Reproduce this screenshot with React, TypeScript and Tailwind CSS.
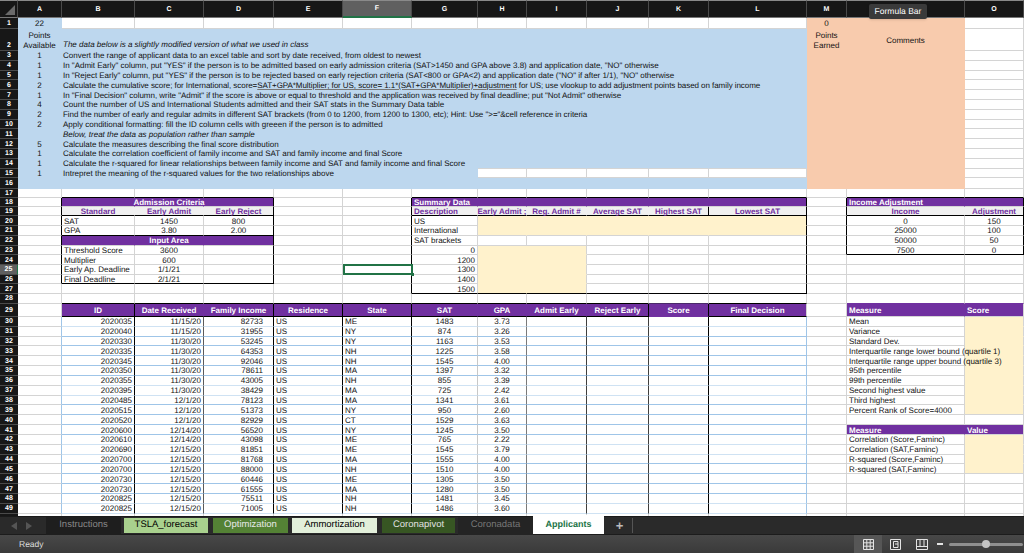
import React from "react";

const cols = ["A", "B", "C", "D", "E", "F", "G", "H", "I", "J", "K", "L", "M", "N", "O"];
const rowNums = Array.from({ length: 50 }, (_, i) => i + 1);
const lightRows = [30, 36, 37, 42, 43, 48, 49];

const applicants = [
  ["2020035", "11/15/20", "82733", "ME", "1483", "3.73"],
  ["2020040", "11/15/20", "31955", "NY", "874", "3.26"],
  ["2020330", "11/30/20", "53245", "NY", "1163", "3.53"],
  ["2020335", "11/30/20", "64353", "NH", "1225", "3.58"],
  ["2020345", "11/30/20", "92046", "NH", "1545", "4.00"],
  ["2020350", "11/30/20", "78611", "MA", "1397", "3.32"],
  ["2020355", "11/30/20", "43005", "NH", "855", "3.39"],
  ["2020395", "11/30/20", "38429", "MA", "725", "2.42"],
  ["2020485", "12/1/20", "78123", "MA", "1341", "3.61"],
  ["2020515", "12/1/20", "51373", "NY", "950", "2.60"],
  ["2020520", "12/1/20", "82929", "CT", "1529", "3.63"],
  ["2020600", "12/14/20", "56520", "NY", "1245", "3.50"],
  ["2020610", "12/14/20", "43098", "ME", "765", "2.22"],
  ["2020690", "12/15/20", "81851", "ME", "1545", "3.79"],
  ["2020700", "12/15/20", "81768", "MA", "1555", "4.00"],
  ["2020700", "12/15/20", "88000", "NH", "1510", "4.00"],
  ["2020730", "12/15/20", "60446", "ME", "1305", "3.50"],
  ["2020730", "12/15/20", "61555", "MA", "1280", "3.50"],
  ["2020825", "12/15/20", "75511", "NH", "1481", "3.45"],
  ["2020825", "12/15/20", "71005", "NH", "1486", "3.60"],
];

const text: Record<string, React.ReactNode> = {
  A1: "22",
  A2: (
    <>
      Points
      <br />
      Available
    </>
  ),
  B2: <i>The data below is a slightly modified version of what we used in class</i>,
  A3: "1",
  B3: "Convert the range of applicant data to an excel table and sort by date received, from oldest to newest",
  A4: "1",
  B4: <span className="tracking-[-0.012px]">In "Admit Early" column, put "YES" if the person is to be admitted based on early admission criteria (SAT&gt;1450 and GPA above 3.8) and application date, "NO" otherwise</span>,
  A5: "1",
  B5: <span className="tracking-[-0.03px]">In "Reject Early" column, put "YES" if the person is to be rejected based on early rejection criteria (SAT&lt;800 or GPA&lt;2) and application date ("NO" if after 1/1), "NO" otherwise</span>,
  A6: "2",
  B6: (
    <span className="tracking-[-0.06px]">
      Calculate the cumulative score; for International, score=
      <span className="underline decoration-[#777]">SAT+GPA*Multiplier; for US, score= 1.1*(SAT+GPA*Multiplier)+adjustment</span> for US; use
      vlookup to add adjustment points based on family income
    </span>
  ),
  A7: "1",
  B7: <span className="tracking-[-0.036px]">In "Final Decision" column, write "Admit" if the score is above or equal to threshold and the application was received by final deadline; put "Not Admit" otherwise</span>,
  A8: "4",
  B8: "Count the number of US and International Students admitted and their SAT stats in the Summary Data table",
  A9: "2",
  B9: <span className="tracking-[-0.04px]">Find the number of early and regular admits in different SAT brackets (from 0 to 1200, from 1200 to 1300, etc); Hint: Use "&gt;="&amp;cell reference in criteria</span>,
  A10: "2",
  B10: "Apply conditional formatting: fill the ID column cells with greeen if the person is to admitted",
  B11: <i>Below, treat the data as population rather than sample</i>,
  A12: "5",
  B12: "Calculate the measures describing the final score distribution",
  A13: "1",
  B13: "Calculate the correlation coefficient of family income and SAT and family income and final Score",
  A14: "1",
  B14: "Calculate the r-squared for linear relationships between family income and SAT and family income and final Score",
  A15: "1",
  B15: "Intrepret the meaning of the r-squared values for the two relationships above",
  M1: "0",
  M2: (
    <>
      Points
      <br />
      Earned
    </>
  ),
  N2: "Comments",

  C18: "Admission Criteria",
  B19: "Standard",
  C19: "Early Admit",
  D19: "Early Reject",
  B20: "SAT",
  C20: "1450",
  D20: "800",
  B21: "GPA",
  C21: "3.80",
  D21: "2.00",
  C22: "Input Area",
  B23: "Threshold Score",
  C23: "3600",
  B24: "Multiplier",
  C24: "600",
  B25: "Early Ap. Deadline",
  C25: "1/1/21",
  B26: "Final Deadline",
  C26: "2/1/21",

  G18: "Summary Data",
  G19: "Description",
  H19: "Early Admit ;",
  I19: "Reg. Admit #",
  J19: "Average SAT",
  K19: "Highest SAT",
  L19: "Lowest SAT",
  G20: "US",
  G21: "International",
  G22: "SAT brackets",
  G23: "0",
  G24: "1200",
  G25: "1300",
  G26: "1400",
  G27: "1500",

  N18: "Income Adjustment",
  N19: "Income",
  O19: "Adjustment",
  N20: "0",
  O20: "150",
  N21: "25000",
  O21: "100",
  N22: "50000",
  O22: "50",
  N23: "7500",
  O23: "0",

  B29: "ID",
  C29: "Date Received",
  D29: "Family Income",
  E29: "Residence",
  F29: "State",
  G29: "SAT",
  H29: "GPA",
  I29: "Admit Early",
  J29: "Reject Early",
  K29: "Score",
  L29: "Final Decision",

  N29: "Measure",
  O29: "Score",
  N30: "Mean",
  N31: "Variance",
  N32: "Standard Dev.",
  N33: "Interquartile range lower bound (quartile 1)",
  N34: "Interquartile range upper bound (quartile 3)",
  N35: "95th percentile",
  N36: "99th percentile",
  N37: "Second highest value",
  N38: "Third highest",
  N39: "Percent Rank of Score=4000",
  N41: "Measure",
  O41: "Value",
  N42: "Correlation (Score,Faminc)",
  N43: "Correlation (SAT,Faminc)",
  N44: "R-squared (Score,Faminc)",
  N45: "R-squared (SAT,Faminc)",
};

applicants.forEach((a, i) => {
  const r = 30 + i;
  text["B" + r] = a[0];
  text["C" + r] = a[1];
  text["D" + r] = a[2];
  text["E" + r] = "US";
  text["F" + r] = a[3];
  text["G" + r] = a[4];
  text["H" + r] = a[5];
});

const inRange = (c: string, from: string, to: string) => c >= from && c <= to;

function fill(c: string, r: number) {
  if (r <= 16 && (c === "M" || c === "N")) return "bg-[#f8cbad]";
  if (r === 1 && c === "A") return "bg-[#bdd7ee]";
  if (r >= 2 && r <= 16 && inRange(c, "A", "L") && !(r === 15 && inRange(c, "H", "L"))) return "bg-[#bdd7ee]";
  if ((r === 18 || r === 22) && inRange(c, "B", "D")) return "bg-[#7030a0]";
  if (r === 19 && inRange(c, "B", "D")) return "bg-[#f0f0f0]";
  if (r === 18 && inRange(c, "G", "L")) return "bg-[#7030a0]";
  if (r === 19 && inRange(c, "G", "L")) return "bg-[#f0f0f0]";
  if ((r === 20 || r === 21) && inRange(c, "H", "L")) return "bg-[#fff2cc]";
  if (r >= 23 && r <= 27 && inRange(c, "H", "I")) return "bg-[#fff2cc]";
  if (r === 18 && inRange(c, "N", "O")) return "bg-[#7030a0]";
  if (r === 19 && inRange(c, "N", "O")) return "bg-[#f0f0f0]";
  if (r === 29 && (inRange(c, "B", "L") || inRange(c, "N", "O"))) return "bg-[#7030a0]";
  if (r === 41 && inRange(c, "N", "O")) return "bg-[#7030a0]";
  if (c === "O" && ((r >= 30 && r <= 39) || (r >= 42 && r <= 45))) return "bg-[#fff2cc]";
  return "bg-white";
}

function rightBorder(c: string, r: number) {
  const hidden = fill(c, r);
  const mainRow = r >= 29 && r <= 49;
  if (r <= 16 && c === "M") return "border-r-transparent";
  if (r <= 16 && hidden === "bg-[#bdd7ee]") return "border-r-transparent";
  if (c === "N" && r <= 16) return "border-r-transparent";
  if (r >= 18 && r <= 26 && (c === "A" || c === "D")) return "border-r-black";
  if (r >= 18 && r <= 27 && (c === "F" || c === "L")) return "border-r-black";
  if (r === 19 && c === "K") return "border-r-black";
  if (r >= 18 && r <= 23 && (c === "M" || c === "O")) return "border-r-black";
  if (r === 29 && (c === "C" || c === "G" || c === "H" || c === "I")) return "border-r-transparent";
  if (mainRow) {
    if (c === "A" && r > 29) return "border-r-[#9fc5e8]";
    if (c === "B" || c === "D" || c === "E" || c === "F" || c === "K") return "border-r-black";
    if (r === 29 && c === "J") return "border-r-black";
    if (c === "C") return "border-r-[#5a5a5a]";
    if (c === "G") return "border-r-[#c8c8c8]";
    if (c === "H") return "border-r-[#7a7a7a]";
    if (c === "I" || c === "J") return "border-r-[#3f3f3f]";
    if (c === "L" && r > 29) return "border-r-[#9fc5e8]";
  }
  if ((r === 18 || r === 22) && inRange(c, "B", "C")) return "border-r-transparent";
  if (r === 18 && inRange(c, "G", "K")) return "border-r-transparent";
  if ((r === 18 || r === 29 || r === 41) && c === "N") return "border-r-transparent";
  if ((r === 20 || r === 21) && inRange(c, "H", "K")) return "border-r-transparent";
  if (r >= 23 && r <= 27 && c === "H") return "border-r-transparent";
  if (r === 19 && (inRange(c, "B", "C") || inRange(c, "G", "J") || c === "N")) return "border-r-transparent";
  return "border-r-[#d4d4d4]";
}

function bottomBorder(c: string, r: number) {
  if (r <= 16 && (c === "M" || c === "N")) return "border-b-transparent";
  if (r < 16 && fill(c, r) === "bg-[#bdd7ee]" && fill(c, r + 1) === "bg-[#bdd7ee]") return "border-b-transparent";
  if (r === 16 && inRange(c, "A", "L")) return "border-b-transparent";
  if ((r === 17 || r === 19 || r === 21 || r === 26) && inRange(c, "B", "D")) return "border-b-black";
  if ((r === 17 || r === 19 || r === 27) && inRange(c, "G", "L")) return "border-b-black";
  if ((r === 17 || r === 19 || r === 23) && inRange(c, "N", "O")) return "border-b-black";
  if ((r === 20 || (r >= 23 && r <= 26)) && inRange(c, "H", "I")) return "border-b-transparent";
  if (r === 20 && inRange(c, "J", "L")) return "border-b-transparent";
  if (r === 28 && c === "K") return "border-b-[#4a2a6a]";
  if (r === 29 && c === "K") return "border-b-transparent";
  if (r === 28 && inRange(c, "B", "L")) return "border-b-black";
  if (r === 29 && inRange(c, "B", "L")) return "border-b-black";
  if (r === 28 && inRange(c, "N", "O")) return "border-b-[#7030a0]";
  if (c === "O" && ((r >= 30 && r <= 38) || (r >= 42 && r <= 44))) return "border-b-transparent";
  if (r >= 30 && r <= 49 && inRange(c, "B", "L")) {
    return lightRows.includes(r) ? "border-b-[#cfe2f3]" : "border-b-[#9fc5e8]";
  }
  return "border-b-[#d4d4d4]";
}

function align(c: string, r: number) {
  if (r <= 16) return c === "B" ? "justify-start pl-[1px]" : "justify-center text-center";
  if ((r === 18 || r === 22) && c === "C") return "justify-center";
  if (r === 18) return "justify-start";
  if ((r === 29 || r === 41) && inRange(c, "N", "O")) return "justify-start";
  if (r === 19 && c === "G") return "justify-start";
  if (r === 19 || r === 29) return "justify-center";
  if (r <= 26 && inRange(c, "C", "D")) return "justify-center";
  if (r >= 23 && r <= 27 && c === "G") return "justify-end";
  if (r <= 23 && inRange(c, "N", "O")) return "justify-center";
  if (r >= 30 && c === "B") return "justify-end";
  if (r >= 30 && c === "C") return "justify-end";
  if (r >= 30 && c === "D") return "justify-end pr-[10px]";
  if (r >= 30 && inRange(c, "G", "H")) return "justify-center";
  return "justify-start";
}

function tone(c: string, r: number) {
  if (fill(c, r) === "bg-[#7030a0]") return "text-white font-bold";
  if (fill(c, r) === "bg-[#f0f0f0]") return "text-[#7030a0] font-bold";
  return "text-[#111]";
}

// grid items paint one by one, so cells whose text or outline spills need to sit above the next cell
function lift(c: string, r: number) {
  if (r <= 16 && c === "B") return "relative z-[1]";
  if (c === "N" && (r === 33 || r === 34)) return "relative z-[1]";
  if (c === "F" && r === 25) return "relative z-[1]";
  if (c === "C" && r === 18) return "relative z-[1]";
  return "";
}

function Cell({ c, r }: { c: string; r: number }) {
  const id = c + r;
  const item = r === 2 && (c === "B") ? "items-end" : "items-center pt-[2px]";
  return (
    <div
      className={`flex min-w-0 px-[2px] border-r border-b whitespace-nowrap ${item} ${fill(c, r)} ${rightBorder(c, r)} ${bottomBorder(c, r)} ${align(c, r)} ${tone(c, r)} ${lift(c, r)}`}
    >
      {text[id] !== undefined && <span className="leading-[10px]">{text[id]}</span>}
      {id === "F25" && (
        <div className="absolute left-0 top-[-1px] w-[70px] h-[11px] border-2 border-[#217346]">
          <div className="absolute right-[-3px] bottom-[-3px] w-[3px] h-[3px] bg-[#217346]" />
        </div>
      )}
    </div>
  );
}

function ColHead({ c }: { c: string }) {
  const active = c === "F";
  return (
    <div
      className={`flex items-center justify-center pt-[2px] font-bold text-[7px] text-white border-t border-t-[#8a8a8a] border-r border-r-[#4a4a4a] ${
        active ? "bg-[#606060] border-b-2 border-b-[#217346]" : "bg-[#171717] border-b border-b-[#777]"
      }`}
    >
      {c === "N" ? "" : c}
    </div>
  );
}

function RowHead({ r }: { r: number }) {
  const active = r === 25;
  return (
    <div
      className={`flex justify-center font-bold text-[7px] leading-[8px] text-white border-b border-b-[#4a4a4a] ${r === 2 ? "items-end" : "items-center pt-[2px]"} ${
        active ? "bg-[#606060] border-r border-r-[#217346]" : "bg-[#171717]"
      }`}
    >
      {r === 50 ? "" : r}
    </div>
  );
}

function Tab({ label, className }: { label: string; className: string }) {
  return <div className={`flex items-center justify-center h-[15px] text-[9.5px] ${className}`}>{label}</div>;
}

function StatusIcons() {
  return (
    <div className="ml-auto flex items-center h-full">
      <div className="flex items-center justify-center w-[28px] h-full bg-[#565656]">
        <svg width="11" height="11" viewBox="0 0 11 11" fill="none" stroke="#e4e4e4" strokeWidth="1">
          <path d="M.5.5h10v10H.5zM.5 3.8h10M.5 7.2h10M3.8.5v10M7.2.5v10" />
        </svg>
      </div>
      <div className="flex items-center justify-center w-[27px] h-full">
        <svg width="11" height="11" viewBox="0 0 11 11" fill="none" stroke="#e4e4e4" strokeWidth="1">
          <path d="M.5.5h10v10H.5zM3.5 2.5h4.5v6H3.5zM5 5h3" />
        </svg>
      </div>
      <div className="flex items-center justify-center w-[25px] h-full">
        <svg width="12" height="11" viewBox="0 0 12 11" fill="none" stroke="#e4e4e4" strokeWidth="1">
          <path d="M.5.5h11v10H.5zM.5 7.5h11M4 .5v7M8 .5v7" />
        </svg>
      </div>
      <div className="ml-[3px] w-[6px] h-[2px] bg-[#e4e4e4]" />
      <div className="relative ml-[6px] mr-[1px] w-[74px] h-[3px] rounded bg-[#8f8f8f]">
        <div className="absolute left-[33px] top-[-3px] w-[8px] h-[8px] rounded-full bg-[#c4c4c4]" />
      </div>
    </div>
  );
}

export default function App() {
  return (
    <div className="relative flex flex-col w-[1024px] h-[553px] overflow-hidden font-['Liberation_Sans',sans-serif] text-[8px] [text-rendering:geometricPrecision]">
      <div className="grid h-[516px] overflow-hidden grid-cols-[18px_44px_73px_69px_70px_69px_69px_66px_49px_60px_62px_60px_98px_40px_118px_59px] grid-rows-[18px_11px_22px_repeat(13,9.8px)_10.6px_9.4px_9px_9px_repeat(9,9.73px)_13px_repeat(20,9.85px)_2px]">
        <div className="relative bg-[#171717] border-t border-t-[#8a8a8a] border-r border-r-[#4a4a4a] border-b border-b-[#777]">
          <svg className="absolute left-[5px] top-[4px]" width="10" height="10" viewBox="0 0 10 10">
            <polygon points="10,0 10,10 0,10" fill="#6a6a6a" />
          </svg>
        </div>
        {cols.map((c) => (
          <ColHead key={c} c={c} />
        ))}
        {rowNums.map((r) => (
          <React.Fragment key={r}>
            <RowHead r={r} />
            {cols.map((c) => (
              <Cell key={c} c={c} r={r} />
            ))}
          </React.Fragment>
        ))}
      </div>

      <div className="flex items-center h-[19px] bg-[#2a2a2a] border-t border-[#1a1a1a] border-b border-b-[#1c1c1c]">
        <div className="flex items-center gap-[9px] w-[46px] pl-[11px]">
          <div className="w-0 h-0 border-y-[4px] border-y-transparent border-r-[6px] border-r-[#555]" />
          <div className="w-0 h-0 border-y-[4px] border-y-transparent border-l-[6px] border-l-[#555]" />
        </div>
        <Tab label="Instructions" className="w-[75px] h-[18px] bg-[#1e1e1e] text-[#888]" />
        <Tab label="TSLA_forecast" className="ml-[3px] w-[84px] bg-[#a9d18e] text-black" />
        <Tab label="Optimization" className="ml-[5px] w-[75px] bg-[#548235] text-[#e8e8e8]" />
        <Tab label="Ammortization" className="ml-[4px] w-[85px] bg-[#e2efda] text-black" />
        <Tab label="Coronapivot" className="ml-[5px] w-[73px] bg-[#375623] text-[#e0e0e0]" />
        <Tab label="Coronadata" className="ml-[3px] w-[75px] h-[18px] bg-[#242424] text-[#777]" />
        <div className="flex items-center justify-center w-[71px] h-[19px] mb-[2px] bg-white text-[9px] font-bold text-[#217346]">Applicants</div>
        <div className="ml-[10px] w-[11px] text-[#bbb] text-[13px] font-bold leading-none text-center">+</div>
        <div className="ml-[7px] w-px h-[15px] bg-[#555]" />
      </div>

      <div className="flex items-center h-[18px] bg-gradient-to-b from-[#484848] to-[#3a3a3a] text-[#ddd]">
        <span className="pl-[19px] text-[8.5px]">Ready</span>
        <StatusIcons />
      </div>

      <div className="absolute left-[869px] top-[4px] flex items-center justify-center w-[58px] h-[15px] rounded-[2px] bg-[#3a3a3a] text-white text-[8.5px] shadow">
        Formula Bar
      </div>
    </div>
  );
}
